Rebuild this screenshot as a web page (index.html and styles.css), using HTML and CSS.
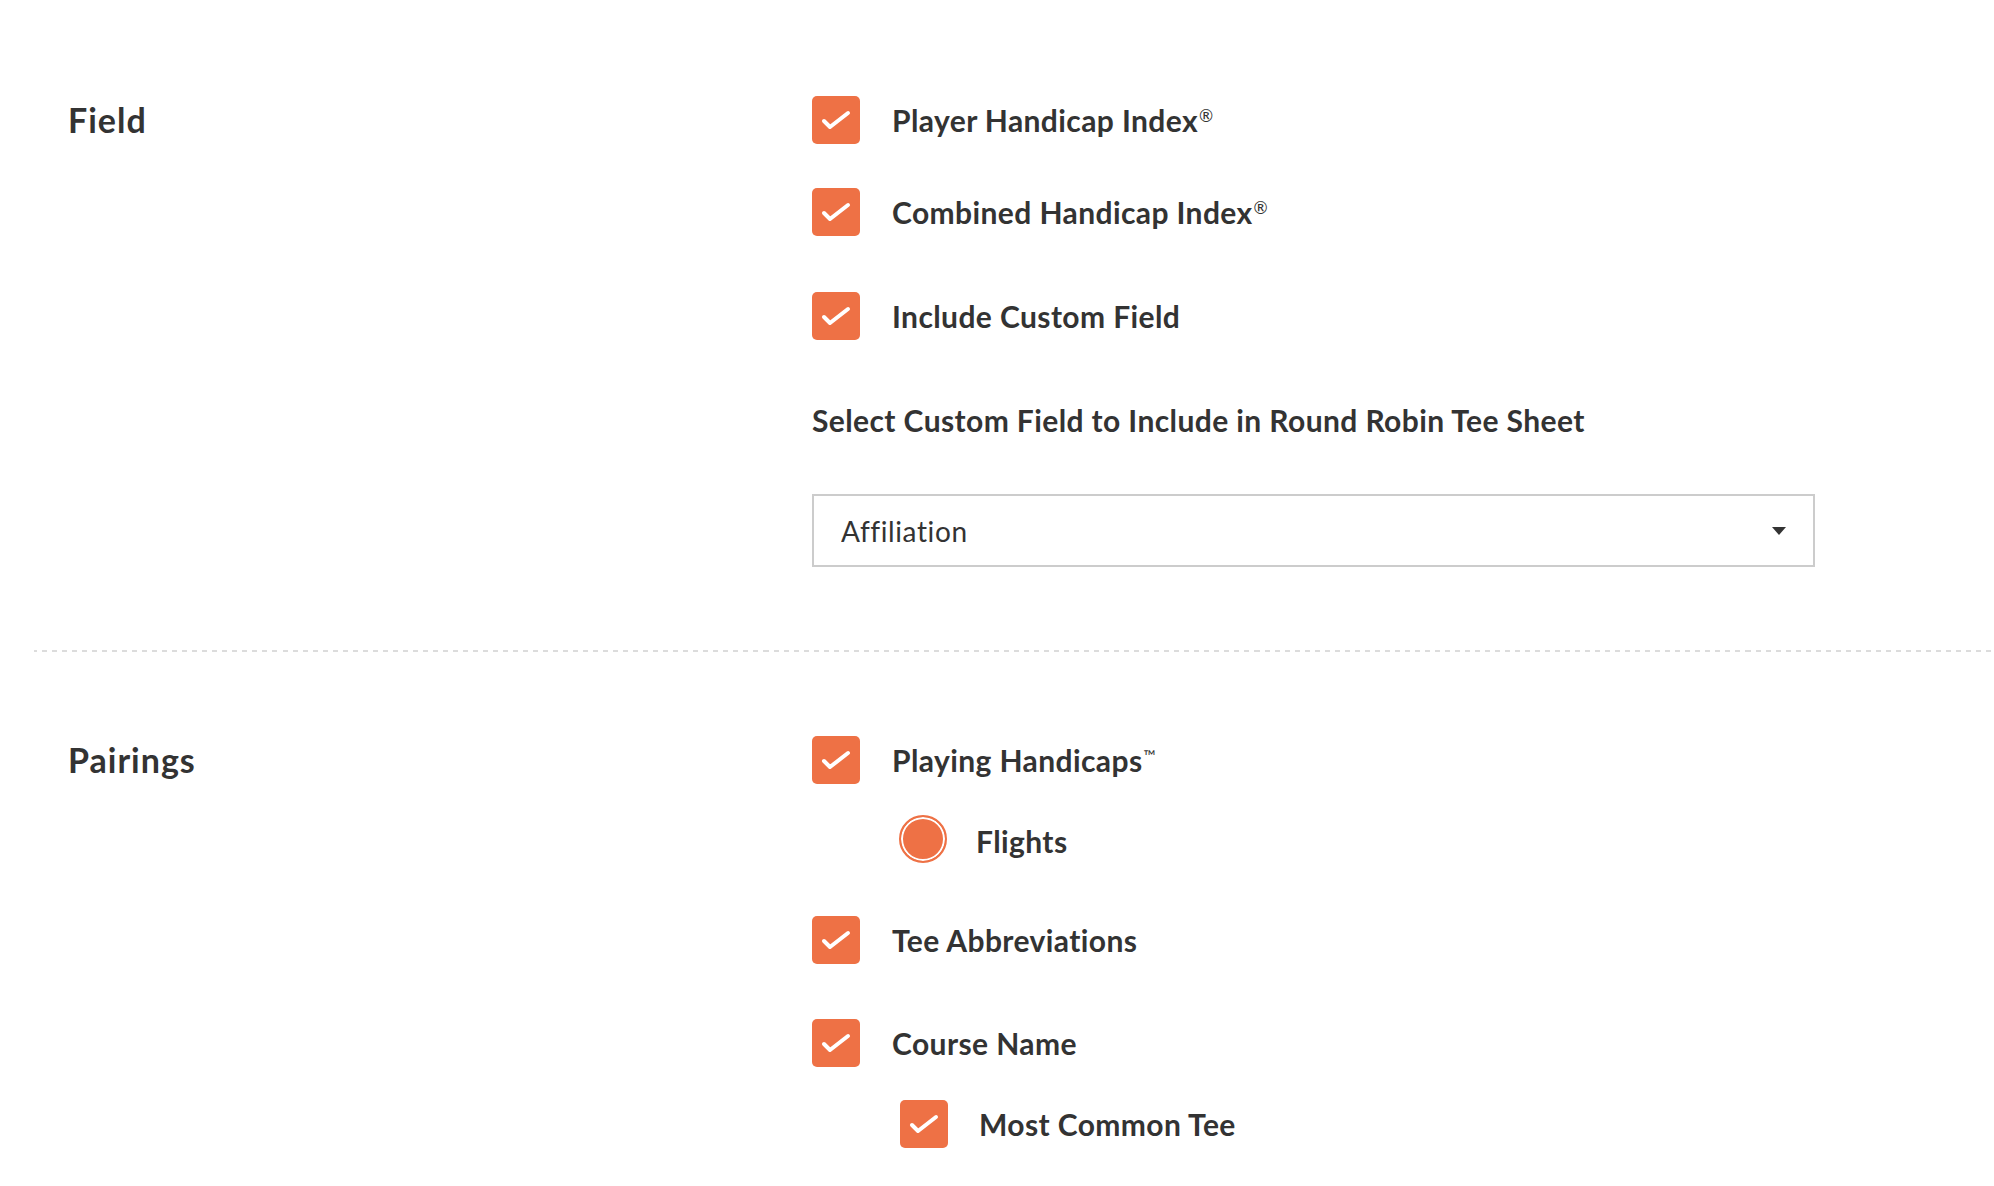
FILE: index.html
```html
<!DOCTYPE html>
<html lang="en">
<head>
<meta charset="UTF-8">
<title>Round Robin Tee Sheet Settings</title>
<link rel="stylesheet" href="styles.css">
</head>
<body>

<div class="settings">

  <div class="section section-field">
    <h3 class="section-title">Field</h3>
    <div class="options">
      <label class="option">
        <span class="checkbox"><svg viewBox="0 0 48 48"><path d="M12 25 L18 31 L36 17"/></svg></span>
        <span class="option-text">Player Handicap Index<sup>®</sup></span>
      </label>
      <label class="option row-2">
        <span class="checkbox"><svg viewBox="0 0 48 48"><path d="M12 25 L18 31 L36 17"/></svg></span>
        <span class="option-text">Combined Handicap Index<sup>®</sup></span>
      </label>
      <label class="option row-3">
        <span class="checkbox"><svg viewBox="0 0 48 48"><path d="M12 25 L18 31 L36 17"/></svg></span>
        <span class="option-text">Include Custom Field</span>
      </label>

      <p class="field-label">Select Custom Field to Include in Round Robin Tee Sheet</p>
      <div class="select-wrap">
        <select class="select">
          <option>Affiliation</option>
        </select>
      </div>
    </div>
  </div>

  <div class="section section-pairings">
    <h3 class="section-title">Pairings</h3>
    <div class="options">
      <label class="option">
        <span class="checkbox"><svg viewBox="0 0 48 48"><path d="M12 25 L18 31 L36 17"/></svg></span>
        <span class="option-text">Playing Handicaps<sup class="tm">™</sup></span>
      </label>
      <label class="option sub radio-row">
        <span class="radio"></span>
        <span class="option-text">Flights</span>
      </label>
      <label class="option tee-row">
        <span class="checkbox"><svg viewBox="0 0 48 48"><path d="M12 25 L18 31 L36 17"/></svg></span>
        <span class="option-text">Tee Abbreviations</span>
      </label>
      <label class="option course-row">
        <span class="checkbox"><svg viewBox="0 0 48 48"><path d="M12 25 L18 31 L36 17"/></svg></span>
        <span class="option-text">Course Name</span>
      </label>
      <label class="option sub common-row">
        <span class="checkbox"><svg viewBox="0 0 48 48"><path d="M12 25 L18 31 L36 17"/></svg></span>
        <span class="option-text">Most Common Tee</span>
      </label>
    </div>
  </div>

</div>

</body>
</html>
```

FILE: styles.css
```css
body {
  margin: 0;
  padding: 0;
  background-color: #fff;
  color: #333;
  font-family: Lato, "Open Sans", sans-serif;
}

.settings {
  padding: 0 2px 0 34px;
}

.section {
  display: flex;
  padding-left: 34px;
}
.section-field {
  padding-top: 96px;
  padding-bottom: 83px;
  border-bottom: 2px solid transparent;
  border-image: repeating-linear-gradient(to right, #dcdcdc 0, #dcdcdc 5px, transparent 5px, transparent 10px) 2;
}
.section-pairings {
  padding-top: 84px;
}

.section-title {
  width: 744px;
  flex-shrink: 0;
  margin: 0;
  font-size: 34px;
  font-weight: 700;
  letter-spacing: 1px;
  line-height: 48px;
}

.options {
  flex: 1;
}

.option {
  display: flex;
  align-items: center;
  height: 48px;
  font-size: 30px;
  font-weight: 700;
  letter-spacing: 0.4px;
  cursor: pointer;
}
.option sup {
  font-size: 17px;
  font-weight: 400;
  letter-spacing: 0;
  vertical-align: top;
  line-height: 1;
  position: relative;
  top: 5px;
  margin-left: 1px;
}
.option sup.tm {
  font-size: 16px;
  top: 6px;
}

.checkbox {
  width: 48px;
  height: 48px;
  flex-shrink: 0;
  border-radius: 5px;
  background-color: #ee7145;
  margin-right: 32px;
}
.checkbox svg {
  display: block;
  width: 48px;
  height: 48px;
}
.checkbox path {
  fill: none;
  stroke: #fff;
  stroke-width: 4;
  stroke-linecap: round;
  stroke-linejoin: round;
}

.radio {
  width: 44px;
  height: 44px;
  flex-shrink: 0;
  border-radius: 50%;
  border: 2px solid #ee7145;
  background-color: #ee7145;
  box-shadow: inset 0 0 0 2px #fff;
  margin-right: 29px;
}

.row-2 { margin-top: 44px; }
.row-3 { margin-top: 56px; }

.sub { padding-left: 87px; }
.radio-row { margin-top: 31px; }
.radio-row .option-text { padding-top: 4px; }
.tee-row { margin-top: 53px; }
.course-row { margin-top: 55px; }
.common-row { margin-top: 33px; padding-left: 88px; }
.common-row .checkbox { margin-right: 31px; }

.field-label {
  margin: 62px 0 0;
  font-size: 30px;
  font-weight: 700;
  letter-spacing: 0.4px;
  line-height: 36px;
}

.select-wrap {
  position: relative;
  width: 1003px;
  margin-top: 56px;
}
.select-wrap::after {
  content: "";
  position: absolute;
  right: 29px;
  top: 33px;
  border-left: 7px solid transparent;
  border-right: 7px solid transparent;
  border-top: 8px solid #333;
  pointer-events: none;
}
.select {
  display: block;
  width: 100%;
  height: 73px;
  padding: 0 60px 0 27px;
  border: 2px solid #ccc;
  border-radius: 0;
  background-color: #fff;
  color: #333;
  font-family: Lato, "Open Sans", sans-serif;
  font-size: 28px;
  letter-spacing: 0.6px;
  box-sizing: border-box;
  appearance: none;
  -webkit-appearance: none;
  outline: none;
}
```
